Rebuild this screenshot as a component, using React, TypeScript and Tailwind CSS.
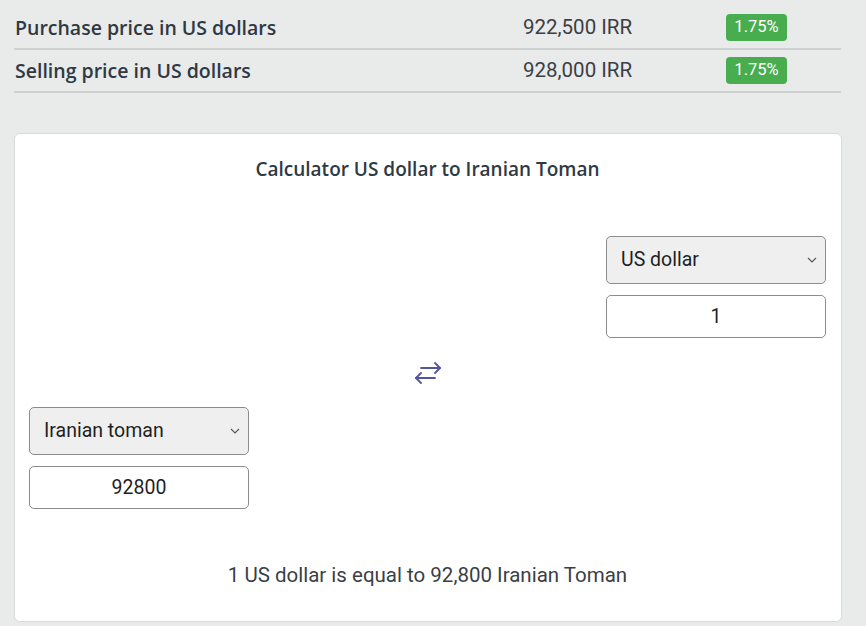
import React from "react";

const rows = [
  { label: "Purchase price in US dollars", value: "922,500 IRR", pct: "1.75%" },
  { label: "Selling price in US dollars", value: "928,000 IRR", pct: "1.75%" },
];

function Chevron() {
  return (
    <svg width="10" height="6" viewBox="0 0 10 6" className="shrink-0">
      <path d="M1 1 L5 5 L9 1" fill="none" stroke="#555" strokeWidth="1.1" />
    </svg>
  );
}

function Select({ label }: { label: string }) {
  return (
    <div className="h-[48px] w-[220px] rounded-[5px] border border-[#8c8c8c] bg-[#efefef] flex items-center justify-between pl-[14px] pr-[8px] text-[19.5px] text-[#1f1f1f] [font-family:Roboto,sans-serif]">
      <span>{label}</span>
      <Chevron />
    </div>
  );
}

function Input({ value }: { value: string }) {
  return (
    <div className="mt-[11px] h-[43px] w-[220px] rounded-[5px] border border-[#8c8c8c] bg-white flex items-center justify-center text-[19.5px] text-[#1f1f1f] [font-family:Roboto,sans-serif]">
      {value}
    </div>
  );
}

export default function App() {
  return (
    <div className="w-[866px] h-[626px] bg-[#e9eaea] overflow-hidden pl-[14px] pt-[7px]">
      <div className="w-[827px]">
        {rows.map((r) => (
          <div key={r.label} className="h-[43px] border-b-2 border-[#cfd0d0] flex items-center">
            <div className="w-[509px] pl-[1px] text-[19.5px] font-semibold text-[#2f3943] [font-family:'Open_Sans',sans-serif]">
              {r.label}
            </div>
            <div className="w-[203px] text-[20.5px] text-[#3a3f45] [font-family:Roboto,sans-serif]">{r.value}</div>
            <div className="h-[27px] w-[61px] rounded-[4px] bg-[#47ad4f] text-white text-[16.5px] flex items-center justify-center [font-family:Roboto,sans-serif]">
              {r.pct}
            </div>
          </div>
        ))}
      </div>
      <div className="mt-[40px] w-[828px] h-[489px] rounded-[6px] border border-[#d9dada] bg-white pl-[14px] pr-[15px] pt-[22px]">
        <div className="text-center text-[19px] font-semibold text-[#2f3943] [font-family:'Open_Sans',sans-serif] leading-[26px]">
          Calculator US dollar to Iranian Toman
        </div>
        <div className="mt-[54px] flex justify-end">
          <div>
            <Select label="US dollar" />
            <Input value="1" />
          </div>
        </div>
        <div className="mt-[24px] flex justify-center">
          <svg width="28" height="22" viewBox="0 0 28 22">
            <g fill="none" stroke="#55559b" strokeWidth="1.8" strokeLinecap="round" strokeLinejoin="round">
              <path d="M7 6 H26" />
              <path d="M21 1 L26 6 L21 11" />
              <path d="M2 16 H21" />
              <path d="M7 11 L2 16 L7 21" />
            </g>
          </svg>
        </div>
        <div className="mt-[23px] flex justify-start">
          <div>
            <Select label="Iranian toman" />
            <Input value="92800" />
          </div>
        </div>
        <div className="mt-[53px] text-center text-[20.5px] text-[#3a3f45] [font-family:Roboto,sans-serif] leading-[26px]">
          1 US dollar is equal to 92,800 Iranian Toman
        </div>
      </div>
    </div>
  );
}
